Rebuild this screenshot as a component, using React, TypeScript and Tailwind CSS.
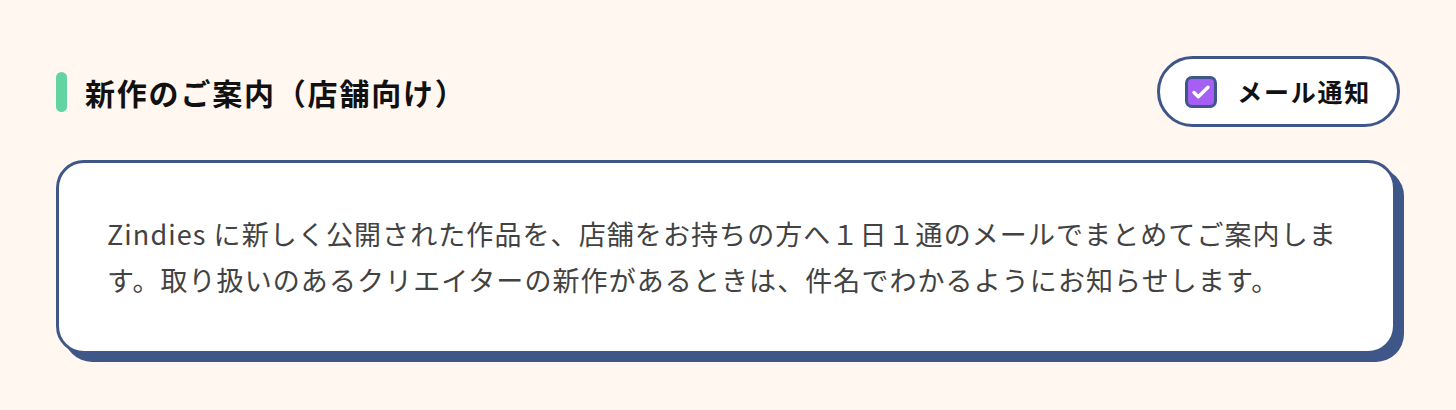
import React from "react";

export default function App() {
  return (
    <div
      className="min-h-screen w-full bg-[#fff7f0] px-[56px] pt-[56px]"
      style={{ fontFamily: '"Noto Sans CJK JP", "Noto Sans", sans-serif' }}
    >
      <div className="flex items-center justify-between">
        <div className="flex items-center gap-[18px]">
          <span className="block h-[40px] w-[11px] rounded-full bg-[#62d4a1]" />
          <h2 className="text-[30px] font-bold leading-none tracking-[0.06em] text-[#111]">
            新作のご案内（店舗向け）
          </h2>
        </div>
        <button
          type="button"
          className="flex h-[71px] items-center gap-[20px] rounded-full border-[3px] border-[#3f5788] bg-white pl-[25px] pr-[26px]"
        >
          <span className="flex h-[32px] w-[32px] items-center justify-center rounded-[7px] border-[3px] border-[#3f5788] bg-[#a55ff5]">
            <svg viewBox="0 0 24 24" className="h-[24px] w-[24px]" fill="none">
              <path
                d="M5 12.5l4.3 4.2L19 7.2"
                stroke="white"
                strokeWidth="3.4"
                strokeLinecap="round"
                strokeLinejoin="round"
              />
            </svg>
          </span>
          <span className="text-[25px] font-bold leading-none tracking-[0.07em] text-[#111]">
            メール通知
          </span>
        </button>
      </div>
      <div className="mr-[4px] mt-[33px] rounded-[28px] border-[3px] border-[#3f5788] bg-white px-[48px] py-[48px] shadow-[8px_8px_0_0_#3f5788]">
        <p className="text-[27px] leading-[46px] tracking-[0.04em] text-[#424242]">
          Zindies に新しく公開された作品を、店舗をお持ちの方へ１日１通のメールでまとめてご案内します。取り扱いのあるクリエイターの新作があるときは、件名でわかるようにお知らせします。
        </p>
      </div>
    </div>
  );
}
